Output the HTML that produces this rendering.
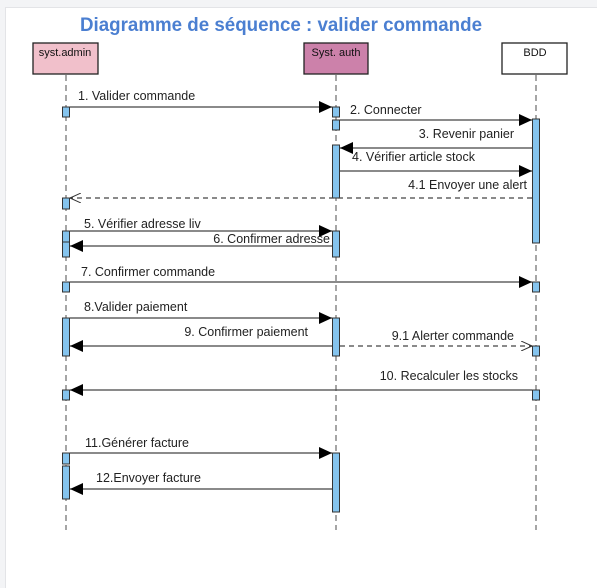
<!DOCTYPE html>
<html><head><meta charset="utf-8"><style>
html,body{margin:0;padding:0;background:#f3f4f6;width:597px;height:577px;overflow:hidden}
.card{position:absolute;left:5px;top:7px;width:600px;height:580px;background:#fff;border-left:1px solid #e3e4e7;border-top:1px solid #e3e4e7}
svg{position:absolute;left:0;top:0}
text{font-family:"Liberation Sans",sans-serif;font-size:12.5px;fill:#222}
</style></head><body>
<div class="card"></div>
<svg width="597" height="577" viewBox="0 0 597 577">
<defs>
<marker id="f" markerWidth="14" markerHeight="12" refX="13" refY="6" orient="auto" markerUnits="userSpaceOnUse"><path d="M0,0 L13,6 L0,12 Z" fill="#000"/></marker>
<marker id="o" markerWidth="12" markerHeight="10" refX="11" refY="5" orient="auto" markerUnits="userSpaceOnUse"><path d="M0,0 L11,5 L0,10" fill="none" stroke="#333" stroke-width="1"/></marker>
</defs>
<text x="80" y="31" style="font-size:19px;font-weight:bold;fill:#4b7fd1" textLength="402" lengthAdjust="spacingAndGlyphs">Diagramme de séquence : valider commande</text>
<g stroke="#777" stroke-width="1.3" stroke-dasharray="6,4">
<line x1="66" y1="75" x2="66" y2="530"/><line x1="336" y1="75" x2="336" y2="530"/><line x1="536" y1="75" x2="536" y2="530"/>
</g>
<g stroke="#222" stroke-width="1.3">
<rect x="33" y="43" width="65" height="31" fill="#f1c0cb"/>
<rect x="304" y="43" width="64" height="31" fill="#cc81aa"/>
<rect x="502" y="43" width="65" height="31" fill="#fff"/>
</g>
<text x="65" y="56" text-anchor="middle" style="font-size:11px;fill:#111">syst.admin</text>
<text x="336" y="56" text-anchor="middle" style="font-size:11px;fill:#111">Syst. auth</text>
<text x="535" y="56" text-anchor="middle" style="font-size:11px;fill:#111">BDD</text>
<g fill="#85c4ee" stroke="#333" stroke-width="1">
<rect x="62.5" y="107" width="7" height="10"/>
<rect x="332.5" y="107" width="7" height="10"/><rect x="332.5" y="120" width="7" height="10"/>
<rect x="532.5" y="119" width="7" height="124"/>
<rect x="332.5" y="145" width="7" height="53"/>
<rect x="62.5" y="198" width="7" height="11"/>
<rect x="62.5" y="231" width="7" height="11"/><rect x="62.5" y="242" width="7" height="15"/>
<rect x="332.5" y="231" width="7" height="26"/>
<rect x="62.5" y="282" width="7" height="10"/><rect x="532.5" y="282" width="7" height="10"/>
<rect x="62.5" y="318" width="7" height="38"/><rect x="332.5" y="318" width="7" height="38"/>
<rect x="532.5" y="346" width="7" height="10"/>
<rect x="62.5" y="390" width="7" height="10"/><rect x="532.5" y="390" width="7" height="10"/>
<rect x="62.5" y="453" width="7" height="11"/><rect x="62.5" y="466" width="7" height="33"/>
<rect x="332.5" y="453" width="7" height="59"/>
</g>
<g stroke="#444" stroke-width="1.2" fill="none">
<line x1="70" y1="107" x2="332" y2="107" marker-end="url(#f)"/>
<line x1="340" y1="120" x2="532" y2="120" marker-end="url(#f)"/>
<line x1="532" y1="148" x2="340" y2="148" marker-end="url(#f)"/>
<line x1="340" y1="171" x2="532" y2="171" marker-end="url(#f)"/>
<line x1="532" y1="198" x2="70" y2="198" stroke-dasharray="5,4" marker-end="url(#o)"/>
<line x1="70" y1="231" x2="332" y2="231" marker-end="url(#f)"/>
<line x1="332" y1="246" x2="70" y2="246" marker-end="url(#f)"/>
<line x1="70" y1="282" x2="532" y2="282" marker-end="url(#f)"/>
<line x1="70" y1="318" x2="332" y2="318" marker-end="url(#f)"/>
<line x1="332" y1="346" x2="70" y2="346" marker-end="url(#f)"/>
<line x1="340" y1="346" x2="532" y2="346" stroke-dasharray="5,4" marker-end="url(#o)"/>
<line x1="532" y1="390" x2="70" y2="390" marker-end="url(#f)"/>
<line x1="70" y1="453" x2="332" y2="453" marker-end="url(#f)"/>
<line x1="332" y1="489" x2="70" y2="489" marker-end="url(#f)"/>
</g>
<text x="78" y="100">1. Valider commande</text>
<text x="350" y="114">2. Connecter</text>
<text x="514" y="138" text-anchor="end">3. Revenir panier</text>
<text x="352" y="161">4. Vérifier article stock</text>
<text x="527" y="189" text-anchor="end">4.1 Envoyer une alert</text>
<text x="84" y="228">5. Vérifier adresse liv</text>
<text x="330" y="243" text-anchor="end">6. Confirmer adresse</text>
<text x="81" y="276">7. Confirmer commande</text>
<text x="84" y="311">8.Valider paiement</text>
<text x="308" y="336" text-anchor="end">9. Confirmer paiement</text>
<text x="514" y="340" text-anchor="end">9.1 Alerter commande</text>
<text x="518" y="380" text-anchor="end">10. Recalculer les stocks</text>
<text x="85" y="447">11.Générer facture</text>
<text x="96" y="482">12.Envoyer facture</text>
</svg>
</body></html>
